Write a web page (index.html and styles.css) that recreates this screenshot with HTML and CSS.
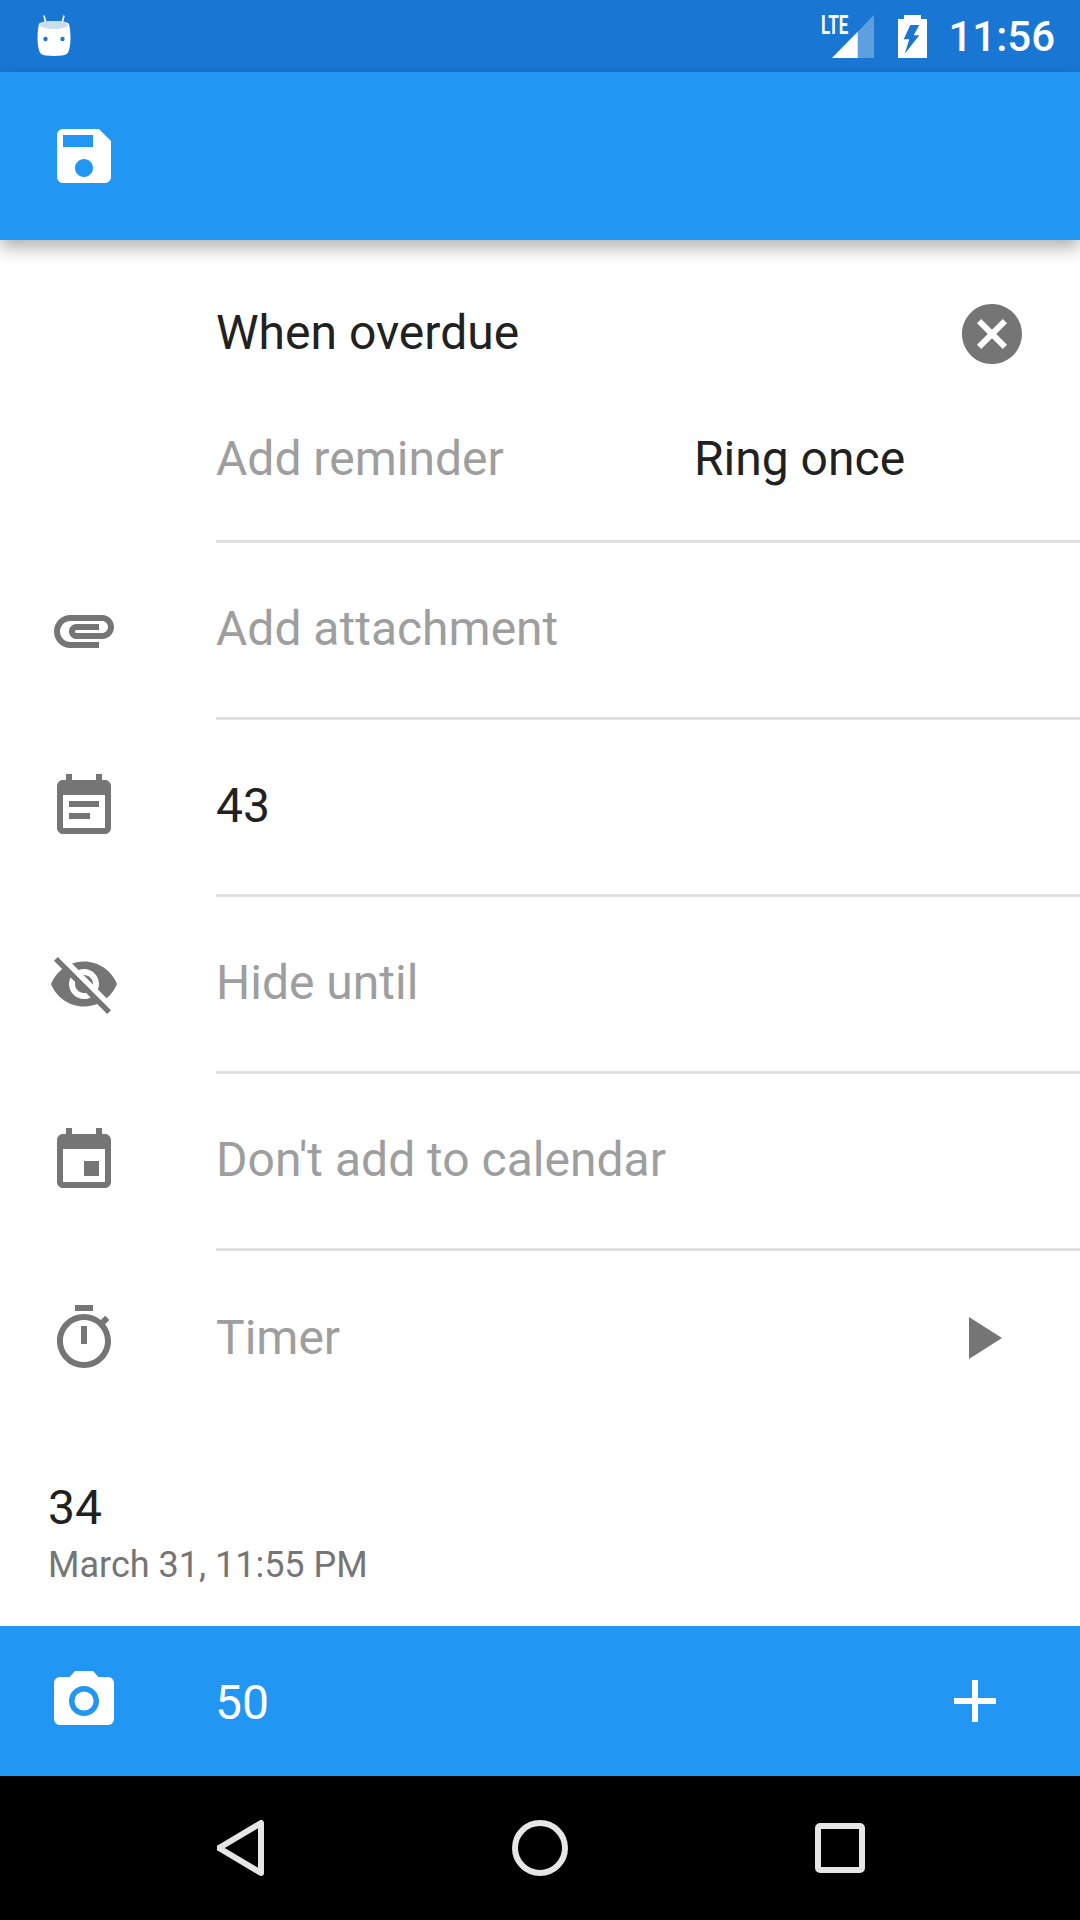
FILE: index.html
```html
<!DOCTYPE html>
<html lang="en">
<head>
  <meta charset="UTF-8">
  <meta name="viewport" content="width=device-width, initial-scale=1.0">
  <title>Edit task</title>
  <link rel="stylesheet" href="styles.css">
</head>
<body>
  <div class="status-bar">
    <svg class="app-icon" viewBox="0 0 36 42">
      <path d="M8 0.5l2 8M28 0.5l-2 8" stroke="#fff" stroke-width="1.6" fill="none"/>
      <path d="M18 6c7 0 14 1 15 3 2 8 2 20 0 26-1 4-3 5-7 5.500-5 .5-11 .5-16 0-4-.5-6-1.500-7-5.500-2-6-2-18 0-26 1-2 8-3 15-3z" fill="#fff"/>
      <ellipse cx="18" cy="10" rx="14" ry="4" fill="#c9dcf2"/>
      <circle cx="9.500" cy="24" r="2.200" fill="#1976d2"/>
      <circle cx="26.500" cy="24" r="2.200" fill="#1976d2"/>
    </svg>
    <div class="status-right">
      <div class="signal">
        <span class="lte">LTE</span>
        <svg class="signal-icon" viewBox="0 0 42 43">
          <path d="M42 0L0 43h42z" fill="#fff" opacity="0.3"/>
          <path d="M25.700 16.700L0 43h25.700z" fill="#fff"/>
        </svg>
      </div>
      <svg class="battery-icon" viewBox="0 0 29 43">
        <path fill-rule="evenodd" fill="#fff" d="M6 0h17v4h6v39H0V4h6zM12.300 10l-6.600 14.300h5.600L6.700 38.700 21.300 20.300h-5.600L21.300 10z"/>
      </svg>
      <span class="clock">11:56</span>
    </div>
  </div>

  <header class="toolbar">
    <svg class="icon icon-white" viewBox="0 0 24 24"><path d="M17 3H5c-1.110 0-2 .9-2 2v14c0 1.100.89 2 2 2h14c1.100 0 2-.9 2-2V7l-4-4zm-5 16c-1.660 0-3-1.340-3-3s1.340-3 3-3 3 1.340 3 3-1.340 3-3 3zm3-10H5V5h10v4z"/></svg>
  </header>

  <main class="content">
    <section class="reminders">
      <div class="reminder-lines">
        <div class="reminder-line">
          <span class="text-dark">When overdue</span>
          <svg class="icon icon-clear" viewBox="0 0 24 24"><path d="M12 2C6.470 2 2 6.470 2 12s4.470 10 10 10 10-4.470 10-10S17.530 2 12 2zm5 13.590L15.590 17 12 13.410 8.410 17 7 15.590 10.590 12 7 8.410 8.410 7 12 10.590 15.590 7 17 8.410 13.410 12 17 15.590z"/></svg>
        </div>
        <div class="reminder-line">
          <span class="text-hint add-reminder">Add reminder</span>
          <span class="text-dark">Ring once</span>
        </div>
      </div>
    </section>

    <div class="row">
      <svg class="icon" viewBox="0 0 24 24"><path d="M2 12.500C2 9.460 4.460 7 7.500 7H18c2.210 0 4 1.790 4 4s-1.790 4-4 4H9.500C8.120 15 7 13.880 7 12.500S8.120 10 9.500 10H17v2H9.410c-.55 0-.55 1 0 1H18c1.100 0 2-.9 2-2s-.9-2-2-2H7.500C5.570 9 4 10.570 4 12.500S5.570 16 7.500 16H17v2H7.500C4.460 18 2 15.540 2 12.500z"/></svg>
      <div class="row-body"><span class="text-hint">Add attachment</span></div>
    </div>

    <div class="row">
      <svg class="icon" viewBox="0 0 24 24"><path d="M17 10H7v2h10v-2zm2-7h-1V1h-2v2H8V1H6v2H5c-1.110 0-1.990.9-1.990 2L3 19c0 1.100.89 2 2 2h14c1.100 0 2-.9 2-2V5c0-1.100-.9-2-2-2zm0 16H5V8h14v11zm-5-5H7v2h7v-2z"/></svg>
      <div class="row-body"><span class="text-dark">43</span></div>
    </div>

    <div class="row">
      <svg class="icon" viewBox="0 0 24 24"><path d="M12 7c2.760 0 5 2.240 5 5 0 .65-.13 1.260-.36 1.830l2.920 2.920c1.510-1.260 2.700-2.890 3.430-4.750-1.730-4.390-6-7.500-11-7.500-1.400 0-2.740.25-3.980.7l2.160 2.160C10.740 7.130 11.350 7 12 7zM2 4.270l2.280 2.280.46.46C3.080 8.300 1.780 10.020 1 12c1.730 4.390 6 7.500 11 7.500 1.550 0 3.030-.3 4.380-.84l.42.42L19.730 22 21 20.730 3.270 3 2 4.270zM7.530 9.800l1.550 1.550c-.05.21-.08.43-.08.65 0 1.660 1.340 3 3 3 .22 0 .44-.03.65-.08l1.550 1.550c-.67.33-1.410.53-2.200.53-2.760 0-5-2.240-5-5 0-.79.2-1.530.53-2.200zm4.310-.78l3.150 3.150.02-.16c0-1.660-1.340-3-3-3l-.17.01z"/></svg>
      <div class="row-body"><span class="text-hint">Hide until</span></div>
    </div>

    <div class="row">
      <svg class="icon" viewBox="0 0 24 24"><path d="M17 12h-5v5h5v-5zM16 1v2H8V1H6v2H5c-1.110 0-1.990.9-1.990 2L3 19c0 1.100.89 2 2 2h14c1.100 0 2-.9 2-2V5c0-1.100-.9-2-2-2h-1V1h-2zm3 18H5V8h14v11z"/></svg>
      <div class="row-body"><span class="text-hint">Don't add to calendar</span></div>
    </div>

    <div class="row row-last">
      <svg class="icon" viewBox="0 0 24 24"><path d="M15 1H9v2h6V1zm-4 13h2V8h-2v6zm8.030-6.610l1.420-1.420c-.43-.51-.9-.99-1.410-1.410l-1.420 1.420C16.070 4.740 14.120 4 12 4c-4.970 0-9 4.030-9 9s4.020 9 9 9 9-4.030 9-9c0-2.120-.74-4.070-1.970-5.610zM12 20c-3.870 0-7-3.130-7-7s3.130-7 7-7 7 3.130 7 7-3.130 7-7 7z"/></svg>
      <div class="row-body">
        <span class="text-hint">Timer</span>
        <svg class="icon icon-play" viewBox="0 0 24 24"><path d="M8 5v14l11-7z"/></svg>
      </div>
    </div>

    <div class="comment">
      <div class="text-dark">34</div>
      <div class="comment-date">March 31, 11:55 PM</div>
    </div>
  </main>

  <div class="comment-bar">
    <svg class="icon icon-white" viewBox="0 0 24 24">
      <circle cx="12" cy="12" r="3.200"/>
      <path d="M9 2L7.170 4H4c-1.100 0-2 .9-2 2v12c0 1.100.9 2 2 2h16c1.100 0 2-.9 2-2V6c0-1.100-.9-2-2-2h-3.170L15 2H9zm3 15c-2.760 0-5-2.240-5-5s2.240-5 5-5 5 2.240 5 5-2.240 5-5 5z"/>
    </svg>
    <span class="comment-input">50</span>
    <svg class="icon icon-white icon-add" viewBox="0 0 24 24"><path d="M19 13h-6v6h-2v-6H5v-2h6V5h2v6h6v2z"/></svg>
  </div>

  <nav class="nav-bar">
    <svg class="nav-icon nav-back" viewBox="0 0 47 56"><path d="M44 3v50L2 28z" fill="none" stroke="#e6e6e6" stroke-width="6" stroke-linejoin="round"/></svg>
    <svg class="nav-icon nav-home" viewBox="0 0 56 56"><circle cx="28" cy="28" r="25" fill="none" stroke="#e6e6e6" stroke-width="6"/></svg>
    <svg class="nav-icon nav-recent" viewBox="0 0 50 50"><rect x="3" y="3" width="44" height="44" rx="2" fill="none" stroke="#e6e6e6" stroke-width="6"/></svg>
  </nav>
</body>
</html>
```

FILE: styles.css
```css
* {
  margin: 0;
  padding: 0;
  box-sizing: border-box;
}

body {
  font-family: 'Roboto', sans-serif;
  background-color: white;
  width: 1080px;
  height: 1920px;
  display: flex;
  flex-direction: column;
  overflow: hidden;
}

.status-bar {
  background-color: #1976d2;
  height: 72px;
  display: flex;
  align-items: center;
  justify-content: space-between;
  padding: 0 25px 0 36px;
  color: white;
}

.app-icon {
  width: 36px;
  height: 42px;
}

.status-right {
  display: flex;
  align-items: center;
}

.signal {
  position: relative;
  width: 42px;
  height: 43px;
}

.signal-icon {
  display: block;
  width: 42px;
  height: 43px;
}

.lte {
  position: absolute;
  left: -11px;
  top: -3px;
  font-size: 25px;
  line-height: 28px;
  font-weight: 700;
  transform: scaleX(0.68);
  transform-origin: left center;
}

.battery-icon {
  width: 29px;
  height: 43px;
  margin-left: 24px;
}

.clock {
  font-size: 42px;
  font-weight: 500;
  margin-left: 21px;
  line-height: 43px;
}

.toolbar {
  background-color: #2196f3;
  height: 168px;
  display: flex;
  align-items: center;
  padding-left: 48px;
  box-shadow: 0 8px 16px rgba(0, 0, 0, 0.3);
  position: relative;
}

.icon {
  width: 72px;
  height: 72px;
  fill: #757575;
  flex-shrink: 0;
}

.icon-white {
  fill: white;
}

.content {
  flex: 1;
}

.text-dark {
  font-size: 48px;
  color: #212121;
}

.text-hint {
  font-size: 48px;
  color: #9e9e9e;
}

.reminders {
  height: 303px;
  padding: 29px 0 0 216px;
}

.reminder-lines {
  height: 274px;
  border-bottom: 3px solid #e0e0e0;
}

.reminder-line {
  height: 126px;
  display: flex;
  align-items: center;
}

.reminder-line .icon-clear {
  margin-left: auto;
  margin-right: 52px;
  margin-top: 3px;
}

.add-reminder {
  width: 478px;
}

.row {
  display: flex;
  align-items: center;
  padding-left: 48px;
  height: 177px;
}

.row > .icon {
  margin-bottom: 3px;
}

.row-body {
  flex: 1;
  height: 100%;
  margin-left: 96px;
  padding-bottom: 3px;
  display: flex;
  align-items: center;
  border-bottom: 3px solid #e0e0e0;
}

.row-last .row-body {
  border-bottom: 0;
  padding-bottom: 4px;
}

.icon-play {
  margin-left: auto;
  margin-right: 63px;
}

.comment {
  padding: 51px 48px 0;
}

.comment-date {
  font-size: 36px;
  color: #757575;
  margin-top: 8px;
}

.comment-bar {
  background-color: #2196f3;
  height: 150px;
  display: flex;
  align-items: center;
  padding-left: 48px;
}

.comment-input {
  font-size: 48px;
  color: white;
  margin: 2px 0 0 95px;
}

.icon-add {
  margin-left: auto;
  margin-right: 69px;
}

.nav-bar {
  background-color: black;
  height: 144px;
  display: flex;
  align-items: center;
}

.nav-icon {
  display: block;
}

.nav-back {
  width: 47px;
  height: 56px;
  margin-left: 217px;
}

.nav-home {
  width: 56px;
  height: 56px;
  margin-left: 248px;
}

.nav-recent {
  width: 50px;
  height: 50px;
  margin-left: 247px;
}
```
